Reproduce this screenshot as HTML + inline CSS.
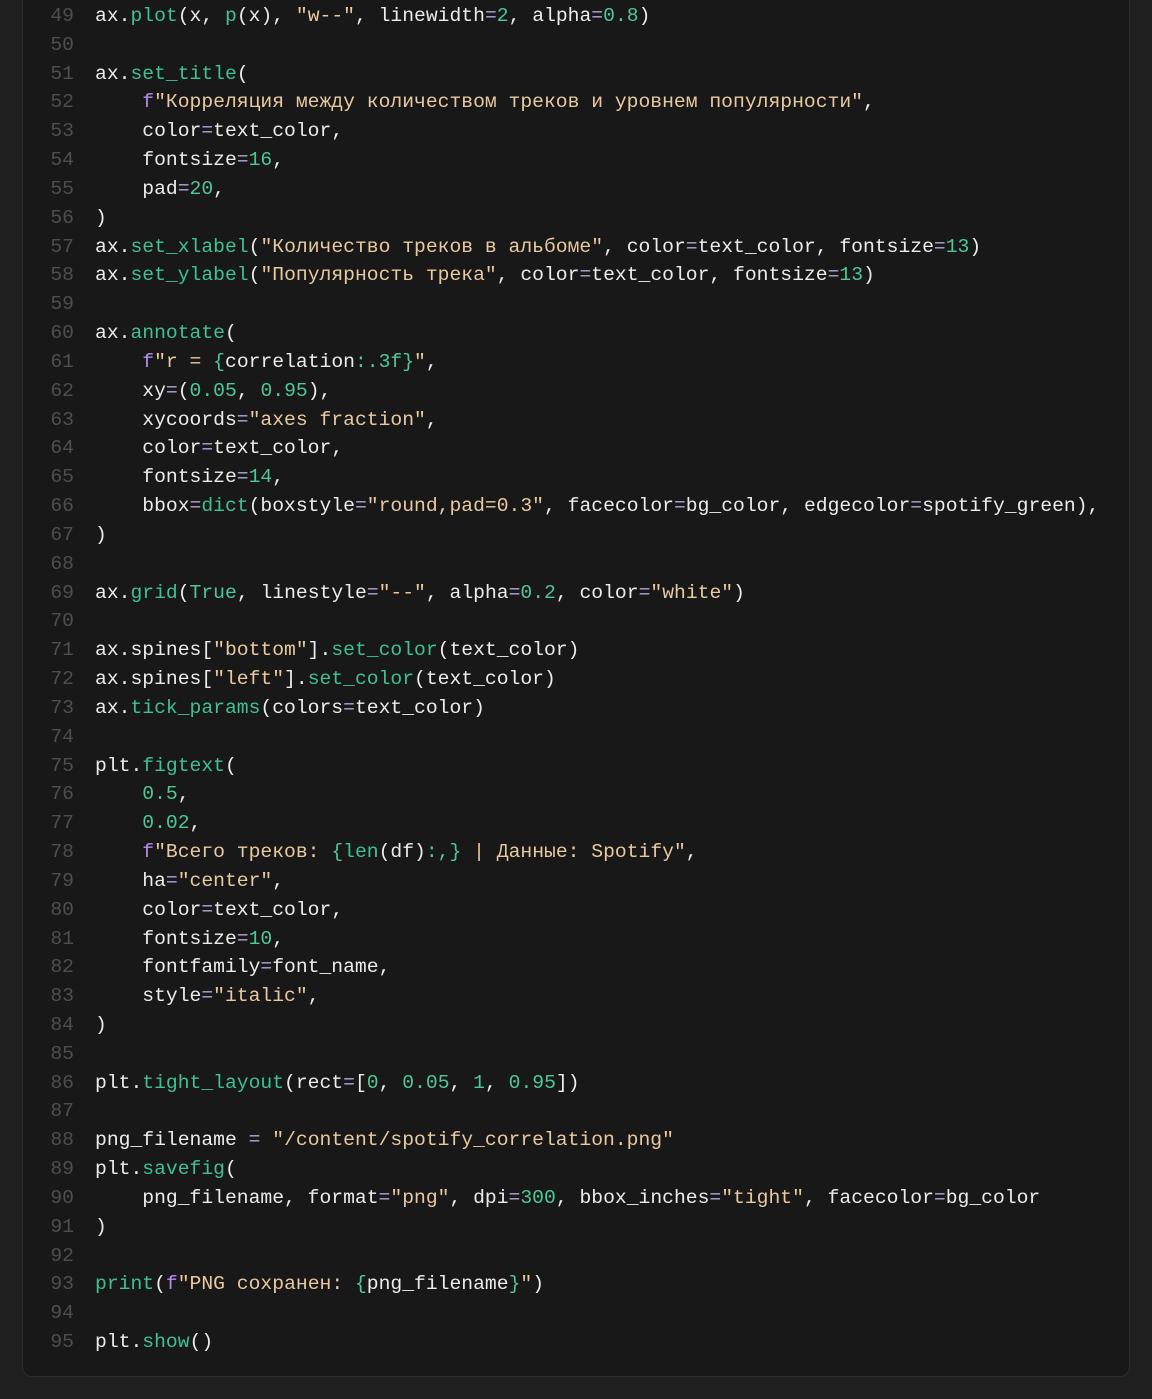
<!DOCTYPE html>
<html><head><meta charset="utf-8"><style>
html,body{margin:0;padding:0;background:#1f1f1f;width:1152px;height:1399px;overflow:hidden}
.panel{position:absolute;left:22px;top:-20px;width:1108px;height:1397px;background:#181818;border:1px solid #2c2c2c;border-radius:10px;box-sizing:border-box}
.code{position:absolute;left:0;top:2px;font-family:"Liberation Mono","DejaVu Sans Mono","Noto Sans CJK SC",monospace;font-size:19.7px;line-height:28.83px;color:#ececec}
.l{height:28.83px;white-space:pre}
.n{display:inline-block;width:74px;text-align:right;color:#4e4e4e;margin-right:21px}
.f{color:#3fc190}.s{color:#e9c9a0}.d{color:#4fc796}.p{color:#b58cf0}.o{color:#b3a6d6}
</style></head><body>
<div class="panel"></div>
<div class="code"><div class="l"><span class="n">49</span>ax.<span class="f">plot</span>(x, <span class="f">p</span>(x), <span class="s">"w--"</span>, linewidth<span class="o">=</span><span class="d">2</span>, alpha<span class="o">=</span><span class="d">0.8</span>)</div><div class="l"><span class="n">50</span></div><div class="l"><span class="n">51</span>ax.<span class="f">set_title</span>(</div><div class="l"><span class="n">52</span>    <span class="p">f</span><span class="s">"Корреляция между количеством треков и уровнем популярности"</span>,</div><div class="l"><span class="n">53</span>    color<span class="o">=</span>text_color,</div><div class="l"><span class="n">54</span>    fontsize<span class="o">=</span><span class="d">16</span>,</div><div class="l"><span class="n">55</span>    pad<span class="o">=</span><span class="d">20</span>,</div><div class="l"><span class="n">56</span>)</div><div class="l"><span class="n">57</span>ax.<span class="f">set_xlabel</span>(<span class="s">"Количество треков в альбоме"</span>, color<span class="o">=</span>text_color, fontsize<span class="o">=</span><span class="d">13</span>)</div><div class="l"><span class="n">58</span>ax.<span class="f">set_ylabel</span>(<span class="s">"Популярность трека"</span>, color<span class="o">=</span>text_color, fontsize<span class="o">=</span><span class="d">13</span>)</div><div class="l"><span class="n">59</span></div><div class="l"><span class="n">60</span>ax.<span class="f">annotate</span>(</div><div class="l"><span class="n">61</span>    <span class="p">f</span><span class="s">"r = </span><span class="d">{</span>correlation<span class="d">:.3f}</span><span class="s">"</span>,</div><div class="l"><span class="n">62</span>    xy<span class="o">=</span>(<span class="d">0.05</span>, <span class="d">0.95</span>),</div><div class="l"><span class="n">63</span>    xycoords<span class="o">=</span><span class="s">"axes fraction"</span>,</div><div class="l"><span class="n">64</span>    color<span class="o">=</span>text_color,</div><div class="l"><span class="n">65</span>    fontsize<span class="o">=</span><span class="d">14</span>,</div><div class="l"><span class="n">66</span>    bbox<span class="o">=</span><span class="f">dict</span>(boxstyle<span class="o">=</span><span class="s">"round,pad=0.3"</span>, facecolor<span class="o">=</span>bg_color, edgecolor<span class="o">=</span>spotify_green),</div><div class="l"><span class="n">67</span>)</div><div class="l"><span class="n">68</span></div><div class="l"><span class="n">69</span>ax.<span class="f">grid</span>(<span class="d">True</span>, linestyle<span class="o">=</span><span class="s">"--"</span>, alpha<span class="o">=</span><span class="d">0.2</span>, color<span class="o">=</span><span class="s">"white"</span>)</div><div class="l"><span class="n">70</span></div><div class="l"><span class="n">71</span>ax.spines[<span class="s">"bottom"</span>].<span class="f">set_color</span>(text_color)</div><div class="l"><span class="n">72</span>ax.spines[<span class="s">"left"</span>].<span class="f">set_color</span>(text_color)</div><div class="l"><span class="n">73</span>ax.<span class="f">tick_params</span>(colors<span class="o">=</span>text_color)</div><div class="l"><span class="n">74</span></div><div class="l"><span class="n">75</span>plt.<span class="f">figtext</span>(</div><div class="l"><span class="n">76</span>    <span class="d">0.5</span>,</div><div class="l"><span class="n">77</span>    <span class="d">0.02</span>,</div><div class="l"><span class="n">78</span>    <span class="p">f</span><span class="s">"Всего треков: </span><span class="d">{</span><span class="f">len</span>(df)<span class="d">:,}</span><span class="s"> | Данные: Spotify"</span>,</div><div class="l"><span class="n">79</span>    ha<span class="o">=</span><span class="s">"center"</span>,</div><div class="l"><span class="n">80</span>    color<span class="o">=</span>text_color,</div><div class="l"><span class="n">81</span>    fontsize<span class="o">=</span><span class="d">10</span>,</div><div class="l"><span class="n">82</span>    fontfamily<span class="o">=</span>font_name,</div><div class="l"><span class="n">83</span>    style<span class="o">=</span><span class="s">"italic"</span>,</div><div class="l"><span class="n">84</span>)</div><div class="l"><span class="n">85</span></div><div class="l"><span class="n">86</span>plt.<span class="f">tight_layout</span>(rect<span class="o">=</span>[<span class="d">0</span>, <span class="d">0.05</span>, <span class="d">1</span>, <span class="d">0.95</span>])</div><div class="l"><span class="n">87</span></div><div class="l"><span class="n">88</span>png_filename <span class="o">=</span> <span class="s">"/content/spotify_correlation.png"</span></div><div class="l"><span class="n">89</span>plt.<span class="f">savefig</span>(</div><div class="l"><span class="n">90</span>    png_filename, format<span class="o">=</span><span class="s">"png"</span>, dpi<span class="o">=</span><span class="d">300</span>, bbox_inches<span class="o">=</span><span class="s">"tight"</span>, facecolor<span class="o">=</span>bg_color</div><div class="l"><span class="n">91</span>)</div><div class="l"><span class="n">92</span></div><div class="l"><span class="n">93</span><span class="f">print</span>(<span class="p">f</span><span class="s">"PNG сохранен: </span><span class="d">{</span>png_filename<span class="d">}</span><span class="s">"</span>)</div><div class="l"><span class="n">94</span></div><div class="l"><span class="n">95</span>plt.<span class="f">show</span>()</div></div>
</body></html>
